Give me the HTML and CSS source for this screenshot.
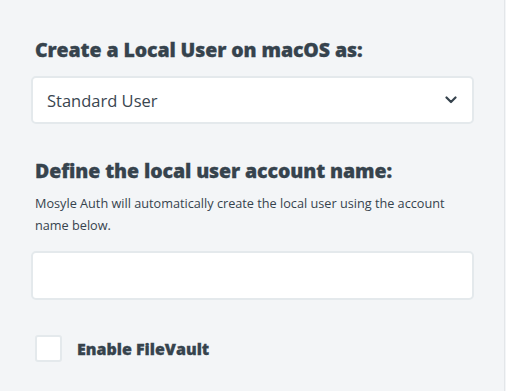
FILE: index.html
```html
<!DOCTYPE html>
<html>
<head>
<meta charset="utf-8">
<link rel="stylesheet" href="styles.css">
</head>
<body>
<div class="page">
  <section class="form">
    <h2 class="title">Create a Local User on macOS as:</h2>
    <div class="select">
      <span class="select-value">Standard User</span>
      <svg class="chev" width="12" height="8" viewBox="0 0 12 8"><path d="M1.5 1.5 L6 6 L10.5 1.5" fill="none" stroke="#36434d" stroke-width="2.2" stroke-linecap="round" stroke-linejoin="round"/></svg>
    </div>
    <h2 class="title title-2">Define the local user account name:</h2>
    <p class="desc">Mosyle Auth will automatically create the local user using the account name below.</p>
    <div class="input"></div>
    <label class="check">
      <span class="box"></span>
      <span class="check-label">Enable FileVault</span>
    </label>
  </section>
</div>
</body>
</html>
```
FILE: styles.css
```css
html, body {
  margin: 0;
  padding: 0;
}
body {
  background: #f3f5f7;
  font-family: "Open Sans", "Liberation Sans", sans-serif;
  color: #36434d;
}
.page {
  width: 505px;
  height: 391px;
  border-right: 1px solid #e3e6e9;
  box-sizing: border-box;
}
.form {
  padding: 37px 0 0 31px;
  width: 443px;
  display: flex;
  flex-direction: column;
}
.title {
  margin: 0 0 0 4px;
  font-size: 19.5px;
  font-weight: 800;
  line-height: 26px;
  letter-spacing: -0.1px;
  color: #36434d;
  -webkit-text-stroke: 0.3px #36434d;
}
.select {
  margin-top: 13px;
  height: 48px;
  box-sizing: border-box;
  background: #fff;
  border: 2px solid #e4e9ec;
  border-radius: 5px;
  display: flex;
  align-items: center;
  justify-content: space-between;
  padding: 0 15px 0 14px;
}
.select-value {
  font-size: 16.5px;
  color: #3a4650;
}
.title-2 {
  margin-top: 34px;
}
.desc {
  margin: 8px 0 0 4px;
  font-size: 12.7px;
  line-height: 22px;
  color: #36434d;
  padding-right: 20px;
}
.input {
  margin-top: 15px;
  height: 49px;
  box-sizing: border-box;
  background: #fff;
  border: 2px solid #e4e9ec;
  border-radius: 5px;
}
.check {
  margin: 35px 0 0 4px;
  display: flex;
  align-items: center;
  gap: 15px;
}
.box {
  width: 27px;
  height: 27px;
  box-sizing: border-box;
  background: #fff;
  border: 2px solid #e4e9ec;
  border-radius: 3px;
}
.check-label {
  font-size: 16px;
  font-weight: 800;
  color: #36434d;
  -webkit-text-stroke: 0.3px #36434d;
}
```
